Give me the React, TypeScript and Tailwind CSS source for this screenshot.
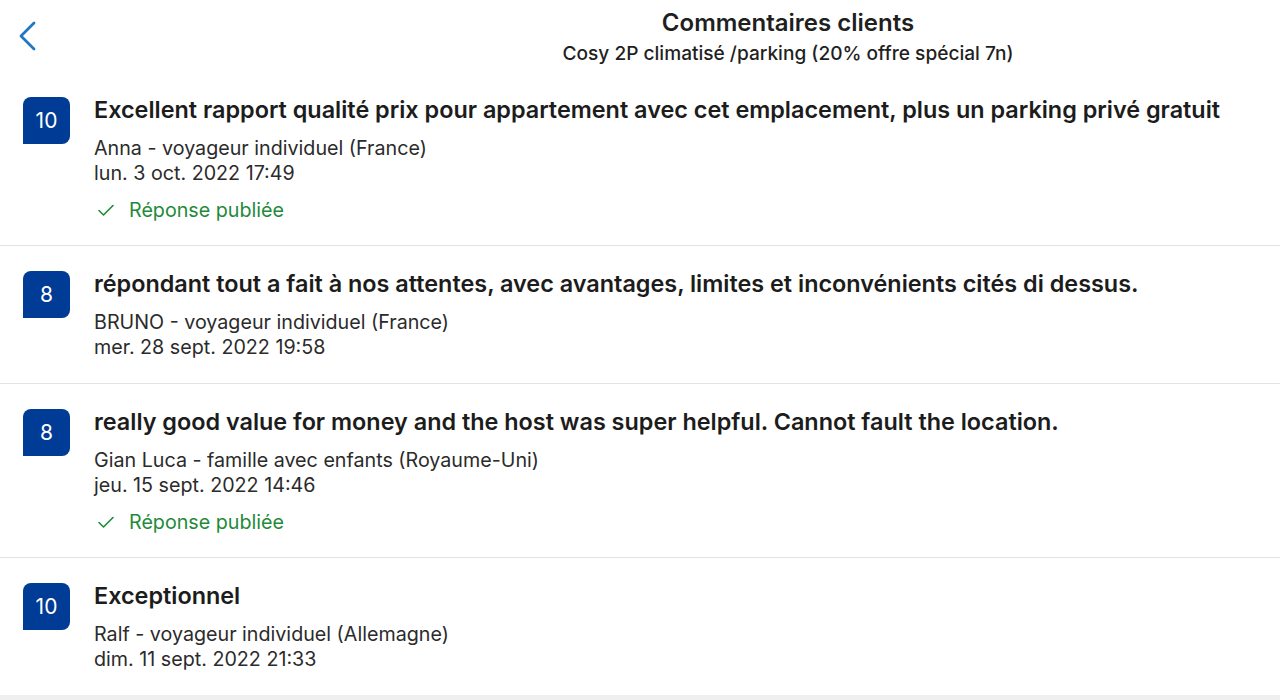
import React from "react";

type Review = {
  score: number;
  title: string;
  author: string;
  date: string;
  replied: boolean;
};

const reviews: Review[] = [
  {
    score: 10,
    title:
      "Excellent rapport qualité prix pour appartement avec cet emplacement, plus un parking privé gratuit",
    author: "Anna - voyageur individuel (France)",
    date: "lun. 3 oct. 2022 17:49",
    replied: true,
  },
  {
    score: 8,
    title:
      "répondant tout a fait à nos attentes, avec avantages, limites et inconvénients cités di dessus.",
    author: "BRUNO - voyageur individuel (France)",
    date: "mer. 28 sept. 2022 19:58",
    replied: false,
  },
  {
    score: 8,
    title:
      "really good value for money and the host was super helpful. Cannot fault the location.",
    author: "Gian Luca - famille avec enfants (Royaume-Uni)",
    date: "jeu. 15 sept. 2022 14:46",
    replied: true,
  },
  {
    score: 10,
    title: "Exceptionnel",
    author: "Ralf - voyageur individuel (Allemagne)",
    date: "dim. 11 sept. 2022 21:33",
    replied: false,
  },
];

function ReviewItem({ r, last }: { r: Review; last: boolean }) {
  return (
    <div
      className={
        "flex pl-[23px] pr-4 pt-[25px] pb-[23px] " +
        (last ? "" : "border-b border-[#e3e3e3]")
      }
    >
      <div className="w-[47px] h-[47px] shrink-0 bg-[#003b95] rounded-tl-[8px] rounded-tr-[8px] rounded-br-[8px] flex items-center justify-center text-white text-[21px] leading-none">
        {r.score}
      </div>
      <div className="ml-[24px] flex flex-col">
        <div className="text-[23.4px] leading-[26px] font-semibold text-[#1c1c1c] whitespace-nowrap">
          {r.title}
        </div>
        <div className="mt-[13px] text-[19.7px] leading-[25px] text-[#2b2b2b] whitespace-nowrap">
          {r.author}
        </div>
        <div className="text-[19.7px] leading-[25px] text-[#2b2b2b]">{r.date}</div>
        {r.replied && (
          <div className="mt-[12px] flex items-center text-[19.7px] leading-[24px] text-[#1f8a3a]">
            <svg
              width="20"
              height="20"
              viewBox="0 0 20 20"
              fill="none"
              stroke="#1f8a3a"
              strokeWidth="1.6"
              strokeLinecap="round"
              strokeLinejoin="round"
              className="ml-[2px]"
            >
              <path d="M3 10.5 L7.5 15 L17 5.5" />
            </svg>
            <span className="ml-[13px]">Réponse publiée</span>
          </div>
        )}
      </div>
    </div>
  );
}

export default function App() {
  return (
    <div
      className="w-[1280px] h-[700px] bg-white overflow-hidden flex flex-col"
      style={{ fontFamily: "Inter, 'Noto Sans', sans-serif" }}
    >
      <div className="relative h-[72px] shrink-0 flex flex-col items-center pt-[8px]">
        <button className="absolute left-[17px] top-[20px] text-[#1f76c2]">
          <svg
            width="22"
            height="32"
            viewBox="0 0 22 32"
            fill="none"
            stroke="#1f76c2"
            strokeWidth="2.8"
            strokeLinecap="round"
            strokeLinejoin="round"
          >
            <path d="M17 3 L4 16 L17 29" />
          </svg>
        </button>
        <div className="text-[24px] leading-[30px] font-semibold text-[#1f1f1f] ml-[296px]">
          Commentaires clients
        </div>
        <div className="mt-[3px] text-[19.1px] leading-[24px] font-medium text-[#1f1f1f] ml-[296px]">
          Cosy 2P climatisé /parking (20% offre spécial 7n)
        </div>
      </div>
      <div className="flex flex-col flex-1">
        {reviews.map((r, i) => (
          <ReviewItem key={i} r={r} last={i === reviews.length - 1} />
        ))}
        <div className="flex-1" />
        <div className="h-[5px] bg-[#efefef]" />
      </div>
    </div>
  );
}
